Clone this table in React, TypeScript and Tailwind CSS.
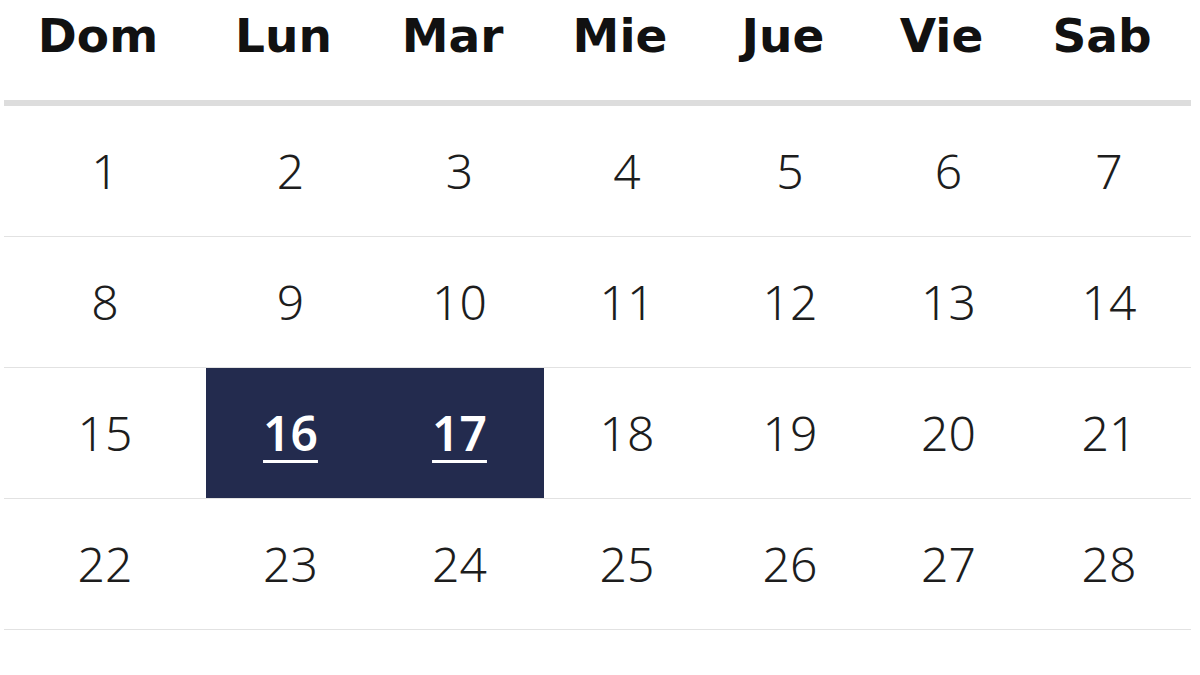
import React from "react";

const headers = ["Dom", "Lun", "Mar", "Mie", "Jue", "Vie", "Sab"];
const weeks = [
  [1, 2, 3, 4, 5, 6, 7],
  [8, 9, 10, 11, 12, 13, 14],
  [15, 16, 17, 18, 19, 20, 21],
  [22, 23, 24, 25, 26, 27, 28],
];
const selected = new Set([16, 17]);

export default function App() {
  return (
    <div className="w-[1200px] h-[675px] bg-white overflow-hidden">
      <div className="ml-[4px] w-[1187px]">
        <div
          className="grid grid-cols-[202px_169px_169px_166px_160px_157px_164px] border-b-[6px] border-[#dddddd] h-[106px]"
          style={{ fontFamily: '"DejaVu Sans", sans-serif' }}
        >
          {headers.map((h) => (
            <div
              key={h}
              className="pr-[14px] text-center text-[47px] font-bold leading-[72px] text-[#111111]"
            >
              {h}
            </div>
          ))}
        </div>
        {weeks.map((w, i) => (
          <div
            key={i}
            className="grid grid-cols-[202px_169px_169px_166px_160px_157px_164px] border-b border-[#e2e2e2] h-[131px]"
            style={{ fontFamily: '"Noto Sans", sans-serif' }}
          >
            {w.map((d) => {
              const sel = selected.has(d);
              return (
                <div
                  key={d}
                  className={
                    sel
                      ? "flex items-center justify-center bg-[#232b4e] text-white text-[48px] font-semibold"
                      : "flex items-center justify-center text-[#1d1d1d] text-[48px] font-light"
                  }
                >
                  <span
                    className={
                      sel
                        ? "underline decoration-[3px] underline-offset-[9px] leading-none"
                        : "leading-none"
                    }
                  >
                    {d}
                  </span>
                </div>
              );
            })}
          </div>
        ))}
      </div>
    </div>
  );
}
